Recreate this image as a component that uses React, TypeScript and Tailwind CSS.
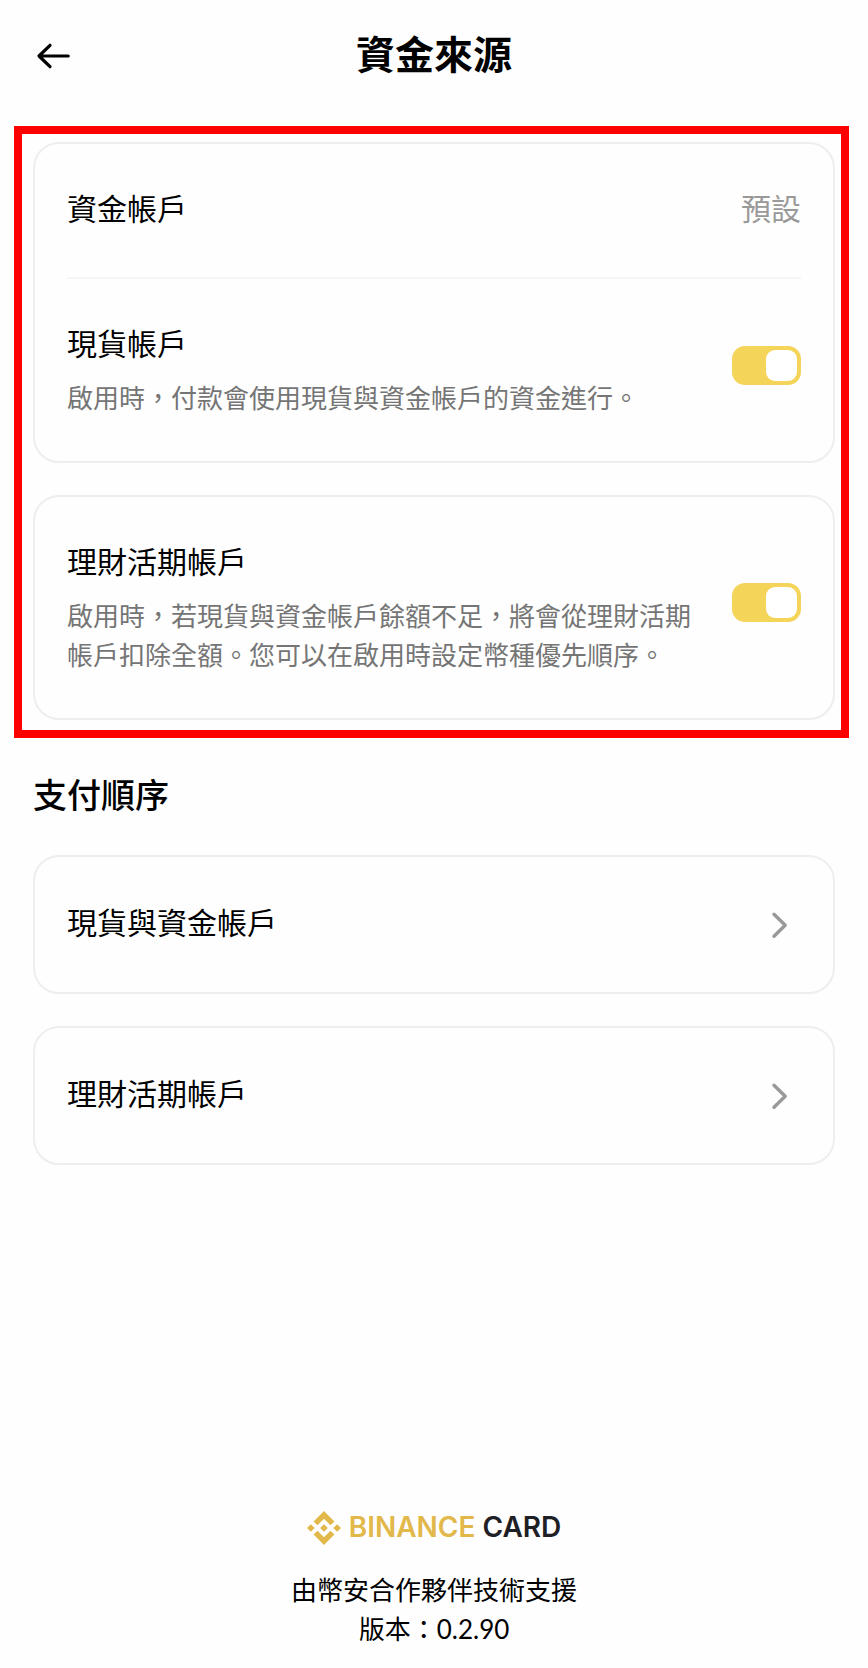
import { useId, useState } from 'react';
import type { ReactNode } from 'react';
import { SiBinance } from 'react-icons/si';

const betaalvolgorde = ['現貨與資金帳戶', '理財活期帳戶'];

function Card({ children }: { children: ReactNode }) {
  return <div className="border-2 border-[#eeeeef] rounded-[26px] px-8">{children}</div>;
}

function ToggleRow({ title, text }: { title: string; text: string }) {
  const id = useId();
  const [on, setOn] = useState(true);

  return (
    <div className="flex items-center gap-8 pt-[41px] pb-[45px]">
      <div className="flex-1">
        <label htmlFor={id} className="block text-[30px] leading-[45px]">{title}</label>
        <p id={`${id}-text`} className="mt-3 text-[26px] leading-[39px] text-[#757575]">{text}</p>
      </div>
      <input
        id={id}
        type="checkbox"
        role="switch"
        aria-describedby={`${id}-text`}
        checked={on}
        onChange={(e) => setOn(e.target.checked)}
        className="mb-1.5 flex h-[39px] w-[69px] shrink-0 cursor-pointer appearance-none items-center rounded-[13px] bg-[#d5d5d5] p-1 checked:justify-end checked:bg-[#f4d55a] before:block before:size-[31px] before:rounded-[9px] before:bg-white"
      />
    </div>
  );
}

function LinkCard({ label }: { label: string }) {
  return (
    <button type="button" className="flex w-full cursor-pointer items-center justify-between rounded-[26px] border-2 border-[#eeeeef] px-8 py-[42px] text-left">
      <span className="pb-1.5 text-[30px] leading-[45px]">{label}</span>
      <svg viewBox="0 0 40 40" className="size-10 shrink-0" fill="none" stroke="#999999" strokeWidth="3.4" strokeLinecap="round" strokeLinejoin="round" aria-hidden="true">
        <path d="M13 9.2 L24.2 20.2 L13 31.2" />
      </svg>
    </button>
  );
}

export default function App() {
  return (
    <div className="flex min-h-screen flex-col bg-[#fefefe] px-[33px] text-black font-['Noto_Sans_CJK_TC',sans-serif]">
      <header className="grid h-28 grid-cols-[1fr_auto_1fr] items-center">
        <button type="button" aria-label="返回" className="size-10 cursor-pointer">
          <svg viewBox="0 0 40 40" className="size-10" fill="none" stroke="currentColor" strokeWidth="3.2" strokeLinecap="round" strokeLinejoin="round" aria-hidden="true">
            <path d="M35.2 20 H6.5 M17 9.3 L6 20 L17 30.7" />
          </svg>
        </button>
        <h1 className="pb-2 text-[39px] leading-[56px] font-bold">資金來源</h1>
      </header>

      <main>
        <section className="relative mt-[30px] flex flex-col gap-8">
          <Card>
            <div className="flex h-[135px] items-center justify-between border-b-2 border-[#f5f5f5] pb-1.5 text-[30px] leading-[45px]">
              <span>資金帳戶</span>
              <span className="text-[#999999]">預設</span>
            </div>
            <ToggleRow title="現貨帳戶" text="啟用時，付款會使用現貨與資金帳戶的資金進行。" />
          </Card>
          <Card>
            <ToggleRow
              title="理財活期帳戶"
              text="啟用時，若現貨與資金帳戶餘額不足，將會從理財活期帳戶扣除全額。您可以在啟用時設定幣種優先順序。"
            />
          </Card>
          {/* red highlight around both account cards */}
          <div className="pointer-events-none absolute -top-4 -right-3.5 -bottom-[18px] -left-[19px] border-8 border-[#ff0000]" />
        </section>

        <section className="mt-12">
          <h2 className="text-[34px] leading-[51px] font-medium">支付順序</h2>
          <div className="mt-9 flex flex-col gap-8">
            {betaalvolgorde.map((label) => (
              <LinkCard key={label} label={label} />
            ))}
          </div>
        </section>
      </main>

      <footer className="mt-auto pb-[19px] text-center text-[26px] leading-[39px]">
        <div className="mb-[22px] flex items-center justify-center gap-2 text-[28px] font-[Inter,sans-serif] font-semibold">
          <SiBinance className="size-[34px] text-[#e2b84b]" aria-hidden="true" />
          <span>
            <span className="text-[#e2b84b]">BINANCE</span> <span className="text-[#1e2026]">CARD</span>
          </span>
        </div>
        <p>由幣安合作夥伴技術支援</p>
        <p>版本：<span className="font-[Lato,sans-serif]">0.2.90</span></p>
      </footer>
    </div>
  );
}
